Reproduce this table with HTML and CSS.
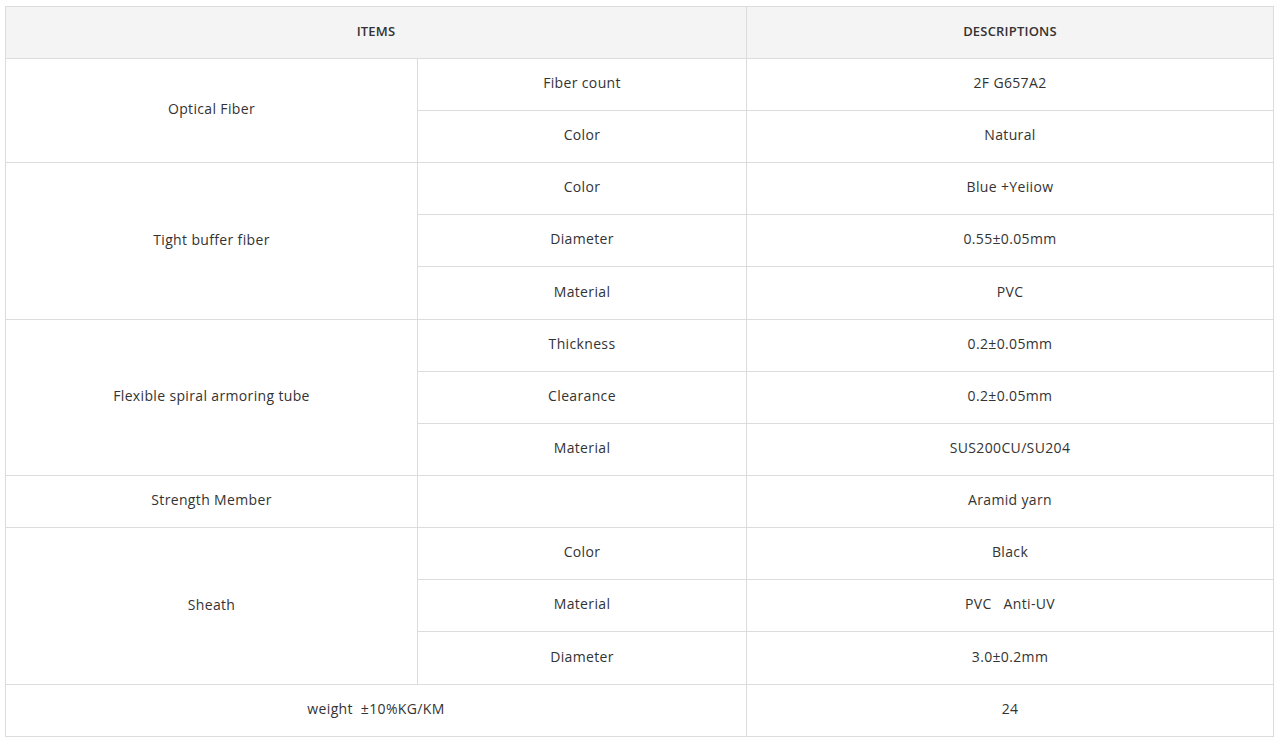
FILE: index.html
```html
<!DOCTYPE html>
<html>
<head>
<meta charset="utf-8">
<link rel="stylesheet" href="styles.css">
</head>
<body>
<div class="wrap">
<table class="spec">
  <colgroup><col class="c1"><col class="c2"><col class="c3"></colgroup>
  <thead>
    <tr><th colspan="2">ITEMS</th><th>DESCRIPTIONS</th></tr>
  </thead>
  <tbody>
    <tr><td rowspan="2">Optical Fiber</td><td>Fiber count</td><td>2F G657A2</td></tr>
    <tr><td>Color</td><td>Natural</td></tr>
    <tr><td rowspan="3">Tight buffer fiber</td><td>Color</td><td>Blue +Yeiiow</td></tr>
    <tr><td>Diameter</td><td>0.55±0.05mm</td></tr>
    <tr class="tall"><td>Material</td><td>PVC</td></tr>
    <tr><td rowspan="3">Flexible spiral armoring tube</td><td>Thickness</td><td>0.2±0.05mm</td></tr>
    <tr><td>Clearance</td><td>0.2±0.05mm</td></tr>
    <tr><td>Material</td><td>SUS200CU/SU204</td></tr>
    <tr><td>Strength Member</td><td></td><td>Aramid yarn</td></tr>
    <tr><td rowspan="3">Sheath</td><td>Color</td><td>Black</td></tr>
    <tr><td>Material</td><td>PVC&nbsp;&nbsp;&nbsp;Anti-UV</td></tr>
    <tr class="tall"><td>Diameter</td><td>3.0±0.2mm</td></tr>
    <tr><td colspan="2">weight&nbsp;&nbsp;±10%KG/KM</td><td>24</td></tr>
  </tbody>
</table>
</div>
</body>
</html>
```
FILE: styles.css
```css
html, body { margin: 0; padding: 0; background: #fff; }
.wrap { padding: 6px 5px; }
.spec {
  width: 1269px;
  border-collapse: collapse;
  table-layout: fixed;
  font-family: "Open Sans", "Liberation Sans", sans-serif;
  font-size: 14px;
  letter-spacing: 0.35px;
  color: #333;
}
.c1 { width: 412px; }
.c2 { width: 329px; }
.spec th, .spec td {
  border: 1px solid #dcdcdc;
  text-align: center;
  vertical-align: middle;
  padding: 0 8px 4px;
  box-sizing: border-box;
}
.spec th {
  background: #f4f4f4;
  font-weight: 600;
  font-size: 13px;
  letter-spacing: 0.2px;
  color: #333;
  height: 52px;
  padding-bottom: 3px;
}
.spec td { height: 52px; }
.spec tr.tall td { height: 53px; }
```
